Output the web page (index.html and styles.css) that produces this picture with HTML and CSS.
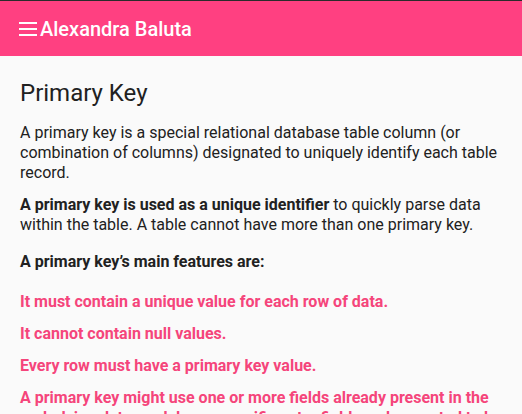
FILE: index.html
```html
<!DOCTYPE html>
<html lang="en">
<head>
  <meta charset="UTF-8" />
  <meta name="viewport" content="width=device-width, initial-scale=1.0" />
  <title>Alexandra Baluta</title>
  <link rel="stylesheet" href="styles.css">
</head>
<body>
  <header class="topbar">
    <svg class="menu-icon" width="18" height="14" viewBox="0 0 18 14">
      <rect x="0" y="0" width="18" height="2" fill="#fff"/>
      <rect x="0" y="6" width="18" height="2" fill="#fff"/>
      <rect x="0" y="12" width="18" height="2" fill="#fff"/>
    </svg>
    <span class="title">Alexandra Baluta</span>
  </header>

  <main class="content">
    <h1>Primary Key</h1>
    <p>A primary key is a special relational database table column (or combination of columns) designated to uniquely identify each table record.</p>
    <p class="spaced"><strong>A primary key is used as a unique identifier</strong> to quickly parse data within the table. A table cannot have more than one primary key.</p>
    <p><strong>A primary key’s main features are:</strong></p>
    <ul class="features">
      <li>It must contain a unique value for each row of data.</li>
      <li>It cannot contain null values.</li>
      <li>Every row must have a primary key value.</li>
      <li>A primary key might use one or more fields already present in the underlying data model, or a specific extra field can be created to be the primary key.</li>
    </ul>
  </main>
</body>
</html>
```

FILE: styles.css
```css
:root {
  --pink: #ff4081;
  --accent: #f5457b;
  --text: #212121;
  --bg: #fafafa;
}
* { box-sizing: border-box; }
html, body {
  margin: 0;
  padding: 0;
  height: 100%;
  overflow: hidden;
  background: var(--bg);
  color: var(--text);
  font-family: Roboto, 'Liberation Sans', sans-serif;
}
body { border-top: 1px solid #2b2b2b; }
.topbar {
  height: 55px;
  background: var(--pink);
  display: flex;
  align-items: center;
  padding: 0 19px;
  gap: 3px;
  color: #fff;
}
.menu-icon { display: block; }
.title {
  font-size: 20px;
  font-weight: 500;
}
.content {
  padding: 0 20px;
}
h1 {
  font-size: 24px;
  font-weight: 400;
  margin: 23px 0 16px;
}
p {
  font-size: 16px;
  line-height: 20px;
  margin: 0 0 12px;
}
p.spaced { margin-bottom: 17px; }
.features {
  list-style: none;
  margin: 20px 0 0;
  padding: 0;
}
.features li {
  color: var(--accent);
  font-weight: 700;
  font-size: 16px;
  line-height: 20px;
  margin-bottom: 12px;
}
```
